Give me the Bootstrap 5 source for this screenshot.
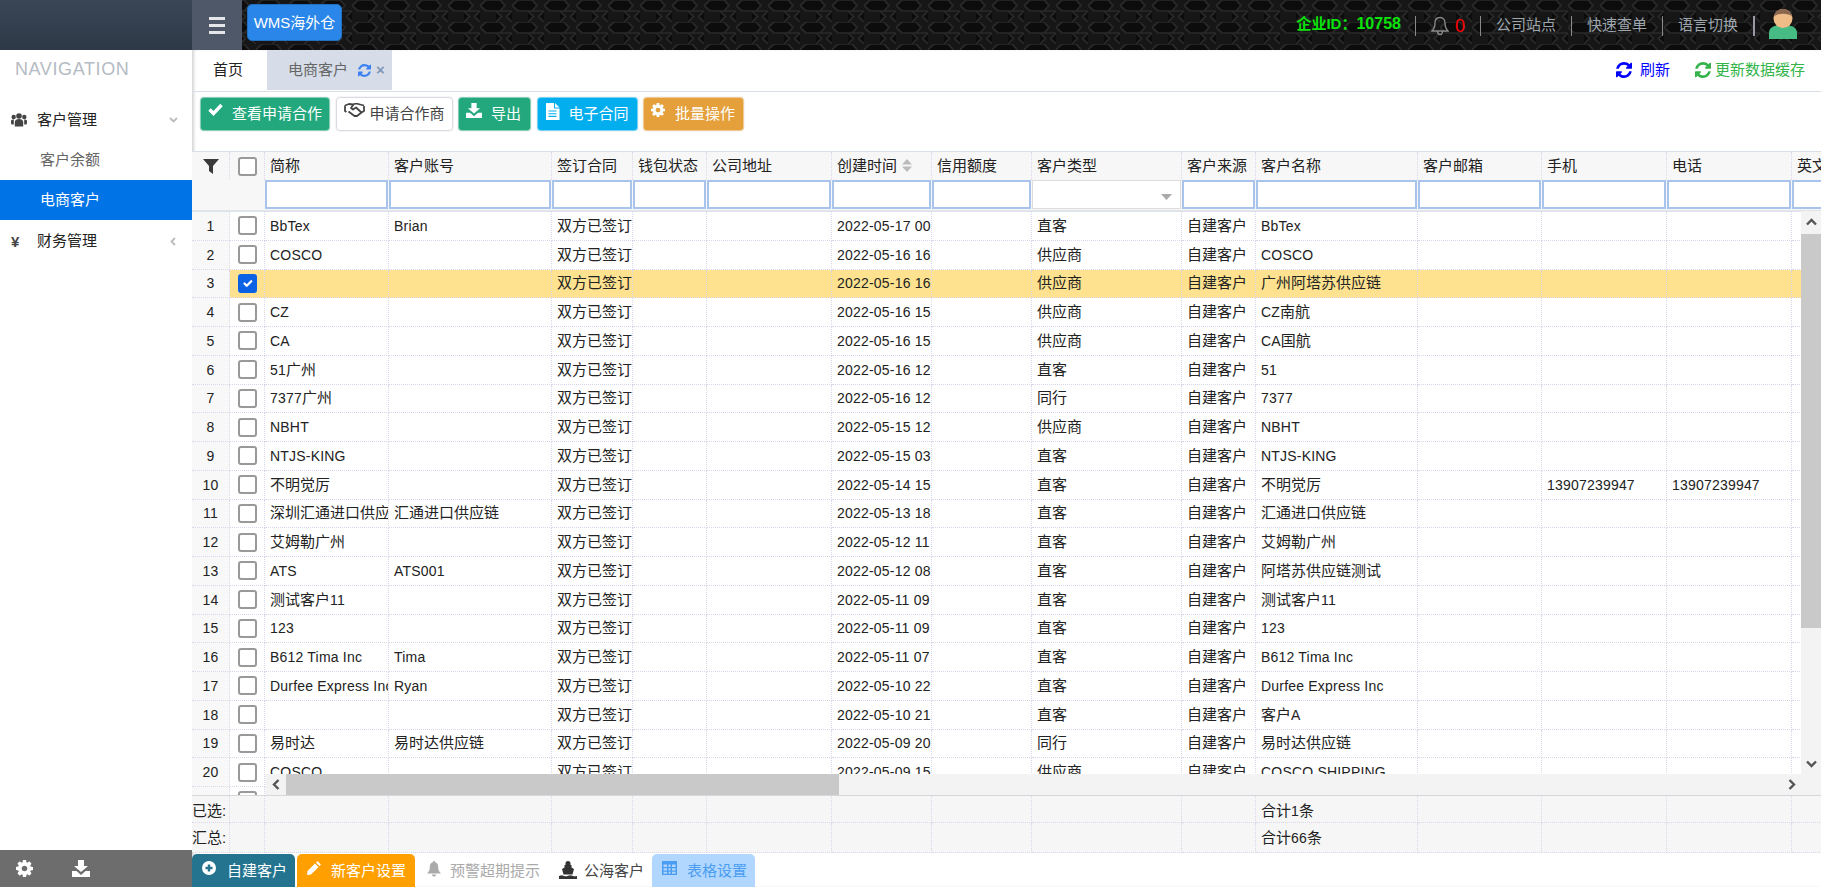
<!DOCTYPE html>
<html lang="zh">
<head>
<meta charset="utf-8">
<title>WMS海外仓</title>
<link href="https://cdn.jsdelivr.net/npm/bootstrap@5.3.0/dist/css/bootstrap.min.css" rel="stylesheet">
<style>
html,body{height:100%;overflow:hidden}
body{font-family:"Liberation Sans","Noto Sans CJK SC",sans-serif;font-size:15px;color:#222;background:#fff}
svg{display:block;flex:none}
.top-bar{height:50px;background:#161616;position:relative}
.hex-bg{position:absolute;inset:0;width:100%;height:100%}
.brand-box{width:192px;height:50px;background:linear-gradient(#3a4656,#2e3947);position:relative}
.burger{width:50px;height:50px;background:#4e5869;position:relative;border:0;padding:0}
.burger span{display:block;width:16px;height:3px;background:#e4e6ea;margin:2px auto}
.wms-btn{position:relative;margin:4px 0 0 5px;width:95px;height:37px;background:#2a86e8;color:#fff;border-radius:5px;border:1px solid #2470c0;padding:0;font-size:15px;line-height:35px;text-align:center}
.top-right{position:relative;height:50px;margin-left:auto;padding:0 24px 0 0;gap:15px;padding-bottom:14px;color:#9ea6ae}
.corp{color:#0be30b;font-weight:700;font-size:15px;margin-right:-1px}
.corp b{font-size:16px}
.vsep{width:1px;height:20px;background:#8a8a8a}
.vsep-b{width:2px;background:#9a9aa6;margin-right:-1px}
.bell-zero{color:#f00;font-size:18px;line-height:20px;margin-left:-9px}
.user-pic{margin-top:14px;margin-bottom:-3px}
.main-wrap{height:837px}
.side{width:192px;background:#fff;position:relative;flex:none}
.side-title{color:#b4bbc3;font-size:18px;letter-spacing:.6px;line-height:20px;padding:9px 0 0 15px;height:50px}
.side-item{height:40px;display:flex;align-items:center;color:#222}
.side-item .ico{width:37px;padding-left:11px;flex:none;color:#444}
.side-sub{padding-left:40px;color:#666}
.side-sub.on{background:#0073e6;color:#fff}
.side-last{height:43px}
.side-item .chev{margin-left:auto;margin-right:14px}
.side-foot{position:absolute;left:0;right:0;bottom:0;height:37px;background:#6c6d6c;padding-left:16px;gap:39px}
.pane{width:1629px;flex:none;box-shadow:inset 3px 0 3px -1px #d5d5d5}
.tabs-row{height:42px;border-bottom:1px solid #d8dfe6;flex:none}
.tab-home{margin-left:21px;width:54px;line-height:40px;height:40px}
.tab-cur{width:125px;height:40px;background:#d6dde8;color:#666;padding-left:21px;gap:10px}
.tab-x{color:#7f95b5;font-size:15px;font-weight:700;margin-left:-5px}
.tab-right{margin-left:auto;padding-right:16px;height:40px}
.tool-row{height:59px;padding:5px 0 0 8px;gap:5.5px;flex:none;align-items:flex-start}
.t-btn{height:34px;padding:0 7px;border-radius:4px;font-size:15px;line-height:32px;display:flex;flex-wrap:nowrap;white-space:nowrap;align-items:flex-start;color:#fff;border:1px solid rgba(255,255,255,.45);box-shadow:0 0 0 1px rgba(0,0,0,.04)}
.t-btn svg{margin-top:5px}
.t-green{background:#23a87d}
.t-white{background:#fff;color:#444;border-color:#d8dce2;padding:0 7px}
.t-sky{background:#03aeef;padding-right:8px}
.t-org{background:#e5a03b;padding-right:8px}
.t-exp{padding-right:9px}
.t-btn:hover{color:#fff}
.t-white:hover{color:#444}
.grid-wrap{height:645px;position:relative;overflow:hidden;border-top:1px solid #d8dfe6;border-bottom:1px solid #d6d6dc;flex:none}
.grid-tbl{table-layout:fixed;width:1720px;border-collapse:separate;border-spacing:0;margin:0;font-size:15px;color:#222}
.grid-tbl.table>thead>tr>th,.grid-tbl.table>tbody>tr>td{padding:0 0 0 5px;border:0;border-right:1px dotted #d9d6ea;border-bottom:1px dotted #d9d6ea;white-space:nowrap;overflow:hidden;font-weight:400;vertical-align:middle;background:#fff;box-shadow:none;line-height:20px;color:#222}
.grid-tbl.table>thead>tr>th{background:#f7f7f7;border-bottom:0}
.grid-tbl.table>thead>tr.head-a>th{height:28px}
.grid-tbl.table>thead>tr.head-b>th{height:30px;padding:0 1px 1px 0;border-right:0;border-bottom:2px solid #dfe3ea}
.grid-tbl.table>tbody>tr>td{height:28.75px}
.grid-tbl.table>tbody>tr>td.no-col,.grid-tbl.table>tbody>tr>td.ck-col{padding:0;text-align:center;background:#f8f8f8}
.grid-tbl.table>tbody>tr>td.ck-col{background:#fff}
.grid-tbl.table>tbody>tr.sel>td{background:#fee28f}
.grid-tbl.table>tbody>tr.sel>td.no-col{background:#f8f8f8}
.grid-tbl.table>thead>tr>th.no-col,.grid-tbl.table>thead>tr>th.ck-col{padding:0}
.lat{font-size:14px;letter-spacing:.2px}
.f-in{display:block;width:100%;height:29px;background:#fff;border:2px solid #a8c4ec;border-radius:0;padding:0}
.f-sel{border:1px solid #dcdcdc;position:relative;display:flex;align-items:center;justify-content:flex-end;padding:4px 8px 0 0}
.grid-tbl .form-check-input{width:19px;height:19px;border:2px solid #999;border-radius:3px;vertical-align:middle;background-color:#fff;display:block;margin:0 auto}
.grid-tbl .form-check-input:checked{background-color:#0b62e4;border-color:#0b62e4}
.sort-ico{margin-left:5px;vertical-align:-1px}
.h-bar{position:absolute;left:73px;right:20px;bottom:0;height:21px;background:#f3f3f3;display:flex;align-items:center}
.h-thumb{position:absolute;left:21px;width:553px;top:0;bottom:0;background:#c8c9c8}
.h-l{position:absolute;left:7px;top:5px}
.h-r{position:absolute;right:5px;top:5px}
.v-bar{position:absolute;right:0;top:59px;bottom:0;width:20px;background:#f3f3f3}
.v-thumb{position:absolute;left:0;right:0;top:23px;height:394px;background:#c8c9c8}
.v-u{position:absolute;left:5px;top:7px}
.v-d{position:absolute;left:5px;bottom:27px}
.sum-wrap{height:57px;overflow:hidden;flex:none}
.sum-tbl.table>tbody>tr>td{height:30px;background:#f6f6f6}
.sum-tbl.table>tbody>tr:first-child>td{height:27px;padding-top:4px}
.sum-tbl.table>tbody>tr>td.no-col{text-align:left;background:#f6f6f6}
.bottom-bar{height:34px;flex:none;gap:0}
.b-btn{height:33px;margin-top:1px;border-radius:5px 5px 0 0;color:#fff;display:flex;align-items:flex-start;line-height:33px}
.b-btn svg{margin-top:7px}
.b-teal{background:#24748f;width:103px;padding-left:10px;gap:11px}
.b-orange{background:#ff9f00;width:118px;margin-left:2px;padding-left:10px;gap:10px}
.b-plain{padding-left:12px;gap:9px;color:#aaa;width:144px}
.b-dark{color:#444;width:93px;padding-left:0;gap:7px}
.b-light{background:#b2d7ff;color:#4a9df0;width:103px;padding-left:10px;gap:10px}
</style>
</head>
<body>
<header class="top-bar d-flex">
  <svg class="hex-bg" aria-hidden="true">
    <defs><pattern id="hx" width="32" height="22" patternUnits="userSpaceOnUse">
      <path d="M6 0h14l5 5.500-5 5.500H6L0 5.500zM21 11h11M16 11l5.500 5.500L16 22M32 11l-5.500 5.500L32 22" fill="#0c0c0c" stroke="#292929" stroke-width="1.700"/>
    </pattern></defs>
    <rect width="100%" height="100%" fill="url(#hx)"/>
  </svg>
  <div class="brand-box"></div>
  <button class="burger d-flex flex-column justify-content-center" type="button" aria-label="菜单"><span></span><span></span><span></span></button>
  <div class="wms-btn">WMS海外仓</div>
  <div class="top-right d-flex align-items-end">
    <span class="corp">企业ID：<b>10758</b></span>
    <span class="vsep"></span>
    <svg width="18" height="20" viewBox="0 0 18 20" fill="none" stroke="#8b8b8b" stroke-width="1.3"><path d="M9 1.500c-3.400 0-5 2.500-5 5.500 0 4-1 6-3 8h16c-2-2-3-4-3-8 0-3-1.600-5.500-5-5.500zM6.500 15.500c0 4 5 4 5 0"/></svg>
    <span class="bell-zero">0</span>
    <span class="vsep"></span>
    <span>公司站点</span><span class="vsep"></span>
    <span>快速查单</span><span class="vsep"></span>
    <span>语言切换</span><span class="vsep vsep-b"></span>
    <svg class="user-pic" width="28" height="30" viewBox="0 0 28 30"><path d="M0 30v-6c0-6 6-8 14-8s14 2 14 8v6z" fill="#46bb84"/><circle cx="14" cy="9.500" r="9.500" fill="#efbb86"/><path d="M4.800 7.500C5.500 3 9 0 14 0s8.500 3 9.200 7.500C20 3.800 8 3.800 4.800 7.500z" fill="#8b6750"/></svg>
  </div>
</header>

<div class="main-wrap d-flex">
  <aside class="side">
    <div class="side-title">NAVIGATION</div>
    <div class="side-item">
      <span class="ico"><svg width="16" height="14" viewBox="0 0 16 14" fill="#444"><circle cx="8" cy="3" r="2.800"/><circle cx="2.700" cy="4" r="2.200"/><circle cx="13.300" cy="4" r="2.200"/><path d="M3.800 13.500V9c0-2 2-3 4.200-3s4.200 1 4.200 3v4.500zM0 10V8c0-1 1-1.500 2.800-1.500v5H.5zM16 10V8c0-1-1-1.500-2.800-1.500v5h2.300z"/></svg></span>
      <span>客户管理</span>
      <svg class="chev" width="9" height="6" viewBox="0 0 9 6" fill="none" stroke="#bbb" stroke-width="1.800"><path d="M1 1l3.500 3.500L8 1"/></svg>
    </div>
    <div class="side-item side-sub">客户余额</div>
    <div class="side-item side-sub on">电商客户</div>
    <div class="side-item side-last">
      <span class="ico" style="font-size:15px;font-weight:700;line-height:1">¥</span>
      <span>财务管理</span>
      <svg class="chev" style="margin-right:16px" width="6" height="9" viewBox="0 0 6 9" fill="none" stroke="#bbb" stroke-width="1.800"><path d="M5 1L1.500 4.500 5 8"/></svg>
    </div>
    <div class="side-foot d-flex align-items-center">
      <svg width="17" height="17" viewBox="0 0 1536 1536" fill="#fff"><path d="M1024 768q0-106-75-181t-181-75-181 75-75 181 75 181 181 75 181-75 75-181zm512-109v222q0 12-8 23t-20 13l-185 28q-19 54-39 91 35 50 107 138 10 12 10 25t-9 23q-27 37-99 108t-94 71q-12 0-26-9l-138-108q-44 23-91 38-16 136-29 186-7 28-36 28h-222q-14 0-24.500-8.500t-11.500-21.500l-28-184q-49-16-90-37l-141 107q-10 9-25 9-14 0-25-11-126-114-165-168-7-10-7-23 0-12 8-23 15-21 51-66.500t54-70.500q-27-50-41-99l-183-27q-13-2-21-12.500t-8-23.500v-222q0-12 8-23t19-13l186-28q14-46 39-92-40-57-107-138-10-12-10-24 0-10 9-23 26-36 98.500-107.500t94.500-71.500q13 0 26 10l138 107q44-23 91-38 16-136 29-186 7-28 36-28h222q14 0 24.500 8.500t11.500 21.500l28 184q49 16 90 37l142-107q9-9 24-9 13 0 25 10 129 119 165 170 7 8 7 22 0 12-8 23-15 21-51 66.500t-54 70.500q26 50 41 98l183 28q13 2 21 12.500t8 23.500z"/></svg>
      <svg width="18" height="17" viewBox="0 0 18 17" fill="#fff"><path d="M6 0h6v6h4l-7 6-7-6h4zM0 11h4.500L9 15l4.500-4H18v6H0z"/></svg>
    </div>
  </aside>

  <main class="pane d-flex flex-column">
    <div class="tabs-row d-flex">
      <div class="tab-home">首页</div>
      <div class="tab-cur d-flex align-items-center">
        <span>电商客户</span>
        <svg width="13" height="13" viewBox="0 0 1536 1536" fill="#3b82f0"><path d="M1511 928q0 5-1 7-64 268-268 434.500t-478 166.500q-146 0-282.500-55t-243.500-157l-129 129q-19 19-45 19t-45-19-19-45v-448q0-26 19-45t45-19h448q26 0 45 19t19 45-19 45l-137 137q71 66 161 102t187 36q134 0 250-65t186-179q11-17 53-117 8-23 30-23h192q13 0 22.500 9.500t9.500 22.500zm25-800v448q0 26-19 45t-45 19h-448q-26 0-45-19t-19-45 19-45l138-138q-148-137-349-137-134 0-250 65t-186 179q-11 17-53 117-8 23-30 23h-199q-13 0-22.500-9.500t-9.500-22.500v-7q65-268 270-434.500t480-166.500q146 0 284 55.500t245 156.500l130-129q19-19 45-19t45 19 19 45z"/></svg>
        <span class="tab-x">×</span>
      </div>
      <div class="tab-right d-flex align-items-center">
        <svg width="16" height="16" viewBox="0 0 1536 1536" fill="#00f"><path d="M1511 928q0 5-1 7-64 268-268 434.500t-478 166.500q-146 0-282.500-55t-243.500-157l-129 129q-19 19-45 19t-45-19-19-45v-448q0-26 19-45t45-19h448q26 0 45 19t19 45-19 45l-137 137q71 66 161 102t187 36q134 0 250-65t186-179q11-17 53-117 8-23 30-23h192q13 0 22.500 9.500t9.500 22.500zm25-800v448q0 26-19 45t-45 19h-448q-26 0-45-19t-19-45 19-45l138-138q-148-137-349-137-134 0-250 65t-186 179q-11 17-53 117-8 23-30 23h-199q-13 0-22.500-9.500t-9.500-22.500v-7q65-268 270-434.500t480-166.500q146 0 284 55.500t245 156.500l130-129q19-19 45-19t45 19 19 45z"/></svg>
        <span class="ms-2" style="color:#00f">刷新</span>
        <svg style="margin-left:25px" width="16" height="16" viewBox="0 0 1536 1536" fill="#34b44a"><path d="M1511 928q0 5-1 7-64 268-268 434.500t-478 166.500q-146 0-282.500-55t-243.500-157l-129 129q-19 19-45 19t-45-19-19-45v-448q0-26 19-45t45-19h448q26 0 45 19t19 45-19 45l-137 137q71 66 161 102t187 36q134 0 250-65t186-179q11-17 53-117 8-23 30-23h192q13 0 22.500 9.500t9.500 22.500zm25-800v448q0 26-19 45t-45 19h-448q-26 0-45-19t-19-45 19-45l138-138q-148-137-349-137-134 0-250 65t-186 179q-11 17-53 117-8 23-30 23h-199q-13 0-22.500-9.500t-9.500-22.500v-7q65-268 270-434.500t480-166.500q146 0 284 55.500t245 156.500l130-129q19-19 45-19t45 19 19 45z"/></svg>
        <span class="ms-1" style="color:#34b44a">更新数据缓存</span>
      </div>
    </div>

    <div class="tool-row d-flex">
      <a class="btn t-btn t-green" href="#"><svg width="15" height="13" viewBox="0 0 15 13" fill="none" stroke="#fff" stroke-width="3.400"><path d="M1.500 6.500l4 4 8-8.500"/></svg><span style="margin-left:9px">查看申请合作</span></a>
      <a class="btn t-btn t-white" href="#"><svg width="21" height="14" viewBox="0 0 21 14" fill="none" stroke="#444" stroke-width="1.800" stroke-linejoin="round"><path d="M1 2.500l4-1.500 4 .5 3-1 4 1 4 1M1 2.500V8l1.500 1M20 3v5l-2.500 1.500-4.500 3.500-2.500 0-6-4.500M9.500 1.500L7 5l2 1.500 3-2 5.500 5"/></svg><span style="margin-left:5px">申请合作商</span></a>
      <a class="btn t-btn t-green t-exp" href="#"><svg width="16" height="15" viewBox="0 0 18 17" fill="#fff"><path d="M6 0h6v6h4l-7 6-7-6h4zM0 11h4.500L9 15l4.500-4H18v6H0z"/></svg><span style="margin-left:9px">导出</span></a>
      <a class="btn t-btn t-sky" href="#"><svg width="15" height="17" viewBox="0 0 15 17" fill="#fff"><path d="M1 0h8v5.500h5.500V17H1zM10 0l4.500 4.500H10z"/><path d="M3.500 8h8M3.500 10.700h8M3.500 13.400h8" stroke="#03aeef" stroke-width="1.100"/></svg><span style="margin-left:9px">电子合同</span></a>
      <a class="btn t-btn t-org" href="#"><svg width="14" height="14" viewBox="0 0 1536 1536" fill="#fff"><path d="M1024 768q0-106-75-181t-181-75-181 75-75 181 75 181 181 75 181-75 75-181zm512-109v222q0 12-8 23t-20 13l-185 28q-19 54-39 91 35 50 107 138 10 12 10 25t-9 23q-27 37-99 108t-94 71q-12 0-26-9l-138-108q-44 23-91 38-16 136-29 186-7 28-36 28h-222q-14 0-24.500-8.500t-11.500-21.500l-28-184q-49-16-90-37l-141 107q-10 9-25 9-14 0-25-11-126-114-165-168-7-10-7-23 0-12 8-23 15-21 51-66.500t54-70.500q-27-50-41-99l-183-27q-13-2-21-12.500t-8-23.500v-222q0-12 8-23t19-13l186-28q14-46 39-92-40-57-107-138-10-12-10-24 0-10 9-23 26-36 98.500-107.500t94.500-71.500q13 0 26 10l138 107q44-23 91-38 16-136 29-186 7-28 36-28h222q14 0 24.500 8.500t11.500 21.500l28 184q49 16 90 37l142-107q9-9 24-9 13 0 25 10 129 119 165 170 7 8 7 22 0 12-8 23-15 21-51 66.500t-54 70.500q26 50 41 98l183 28q13 2 21 12.500t8 23.500z"/></svg><span style="margin-left:10px">批量操作</span></a>
    </div>

    <div class="grid-wrap">
      <table class="table grid-tbl" id="gridMain">
        <colgroup id="cols1"></colgroup>
        <thead>
          <tr class="head-a">
            <th class="no-col text-center"><svg class="mx-auto" width="16" height="15" viewBox="0 0 16 15"><path d="M0 0h16L10 7v8L6 12V7z" fill="#3a3a3a"/></svg></th>
            <th class="ck-col"><input class="form-check-input" type="checkbox" aria-label="全选"></th>
            <th>简称</th><th>客户账号</th><th>签订合同</th><th>钱包状态</th><th>公司地址</th>
            <th>创建时间<svg class="sort-ico d-inline-block" width="10" height="13" viewBox="0 0 10 13" fill="#bbb"><path d="M5 0l5 5.500H0zM5 13L0 7.500h10z"/></svg></th>
            <th>信用额度</th><th>客户类型</th><th>客户来源</th><th>客户名称</th><th>客户邮箱</th><th>手机</th><th>电话</th><th>英文名称</th>
          </tr>
          <tr class="head-b">
            <th></th><th></th>
            <th><div class="f-in"></div></th><th><div class="f-in"></div></th><th><div class="f-in"></div></th><th><div class="f-in"></div></th><th><div class="f-in"></div></th><th><div class="f-in"></div></th><th><div class="f-in"></div></th>
            <th><div class="f-in f-sel"><svg width="11" height="6" viewBox="0 0 11 6" fill="#aaa"><path d="M0 0h11L5.500 6z"/></svg></div></th>
            <th><div class="f-in"></div></th><th><div class="f-in"></div></th><th><div class="f-in"></div></th><th><div class="f-in"></div></th><th><div class="f-in"></div></th><th><div class="f-in"></div></th>
          </tr>
        </thead>
        <tbody id="rows"></tbody>
      </table>
      <div class="h-bar">
        <svg class="h-l" width="8" height="11" viewBox="0 0 8 11" fill="none" stroke="#555" stroke-width="2.400"><path d="M6.500 1L2 5.500 6.500 10"/></svg>
        <div class="h-thumb"></div>
        <svg class="h-r" width="8" height="11" viewBox="0 0 8 11" fill="none" stroke="#555" stroke-width="2.400"><path d="M1.500 1L6 5.500 1.500 10"/></svg>
      </div>
      <div class="v-bar">
        <svg class="v-u" width="11" height="8" viewBox="0 0 11 8" fill="none" stroke="#555" stroke-width="2.400"><path d="M1 6.500L5.500 2 10 6.500"/></svg>
        <div class="v-thumb"></div>
        <svg class="v-d" width="11" height="8" viewBox="0 0 11 8" fill="none" stroke="#555" stroke-width="2.400"><path d="M1 1.500L5.500 6 10 1.500"/></svg>
      </div>
    </div>

    <div class="sum-wrap">
      <table class="table grid-tbl sum-tbl">
        <colgroup id="cols2"></colgroup>
        <tbody id="sumRows"></tbody>
      </table>
    </div>

    <div class="bottom-bar d-flex">
      <a class="b-btn b-teal text-decoration-none" href="#"><svg width="14" height="14" viewBox="0 0 14 14"><circle cx="7" cy="7" r="7" fill="#fff"/><path d="M7 3.500v7M3.500 7h7" stroke="#24748f" stroke-width="2.400"/></svg><span>自建客户</span></a>
      <a class="b-btn b-orange text-decoration-none" href="#"><svg width="14" height="14" viewBox="0 0 14 14" fill="#fff"><path d="M10.500 0L14 3.500 12.500 5 9 1.500zM8 2.500L11.500 6 4 13.500 0 14l.5-4z"/></svg><span>新客户设置</span></a>
      <a class="b-btn b-plain text-decoration-none" href="#"><svg width="14" height="16" viewBox="0 0 14 16" fill="#aaa"><path d="M7 0c.8 0 1.200.6 1.200 1.300 2.300.6 3 2.500 3 5 0 3 1 4.500 2.800 6.200H0C1.800 10.800 2.800 9.300 2.800 6.300c0-2.500.7-4.400 3-5C5.800.6 6.200 0 7 0zM5 13.500h4c0 2.800-4 2.800-4 0z"/></svg><span>预警超期提示</span></a>
      <a class="b-btn b-plain b-dark text-decoration-none" href="#"><svg width="18" height="18" viewBox="0 0 18 18" fill="#333"><path d="M9 0a2.500 2.500 0 0 1 2.500 2.500V4h1v2.500l2.500 1.500-1.500 5.500h-9L3 8l2.500-1.500V4h1V2.500A2.500 2.500 0 0 1 9 0zM0 15c2-1 3-1 4.500-.3s3 .7 4.500 0 3-.7 4.500 0 2.500.7 4.500.3v3H0z"/></svg><span>公海客户</span></a>
      <a class="b-btn b-light text-decoration-none" href="#"><svg width="15" height="14" viewBox="0 0 15 14" fill="#4a9df0"><path d="M0 0h15v14H0zM1.500 3.500v2.500h3.500V3.500zm5 0v2.500h2V3.500zm3.500 0v2.500h3.500V3.500zM1.500 7.300v2.200h3.500V7.300zm5 0v2.200h2V7.300zm3.500 0v2.200h3.500V7.300zM1.500 10.800v2h3.500v-2zm5 0v2h2v-2zm3.500 0v2h3.500v-2z" fill-rule="evenodd"/></svg><span>表格设置</span></a>
    </div>
  </main>
</div>

<script>
var W=[38,35,124,163,81,74,125,100,100,150,74,162,124,125,125,120];
var colHtml=W.map(function(w){return '<col style="width:'+w+'px">'}).join('');
document.getElementById('cols1').innerHTML=colHtml;
document.getElementById('cols2').innerHTML=colHtml;
function t(s){return s.replace(/[\x21-\x7e][\x20-\x7e]*/g,function(m){return '<span class="lat">'+m+'</span>'})}
var D=[
['BbTex','Brian','05-17 00','直客','BbTex'],
['COSCO','','05-16 16','供应商','COSCO'],
['','','05-16 16','供应商','广州阿塔苏供应链'],
['CZ','','05-16 15','供应商','CZ南航'],
['CA','','05-16 15','供应商','CA国航'],
['51广州','','05-16 12','直客','51'],
['7377广州','','05-16 12','同行','7377'],
['NBHT','','05-15 12','供应商','NBHT'],
['NTJS-KING','','05-15 03','直客','NTJS-KING'],
['不明觉厉','','05-14 15','直客','不明觉厉','13907239947','13907239947'],
['深圳汇通进口供应链','汇通进口供应链','05-13 18','直客','汇通进口供应链'],
['艾姆勒广州','','05-12 11','直客','艾姆勒广州'],
['ATS','ATS001','05-12 08','直客','阿塔苏供应链测试'],
['测试客户11','','05-11 09','直客','测试客户11'],
['123','','05-11 09','直客','123'],
['B612 Tima Inc','Tima','05-11 07','直客','B612 Tima Inc'],
['Durfee Express Inc','Ryan','05-10 22','直客','Durfee Express Inc'],
['','','05-10 21','直客','客户A'],
['易时达','易时达供应链','05-09 20','同行','易时达供应链'],
['COSCO','','05-09 15','供应商','COSCO SHIPPING']
];
var h='';
D.forEach(function(r,i){
  var sel=i===2;
  var cells=[r[0],r[1],'双方已签订','','','2022-'+r[2],'',r[3],'自建客户',r[4],'',r[5]||'',r[6]||'',''];
  h+='<tr'+(sel?' class="sel"':'')+'><td class="no-col">'+t(String(i+1))+'</td><td class="ck-col"><input class="form-check-input" type="checkbox" aria-label="选择"'+(sel?' checked':'')+'></td>';
  cells.forEach(function(c){h+='<td>'+t(c)+'</td>'});
  h+='</tr>';
});
var blank='';for(var k=0;k<14;k++)blank+='<td></td>';
h+='<tr><td class="no-col"></td><td class="ck-col"><input class="form-check-input" type="checkbox" aria-label="选择"></td>'+blank+'</tr>';
document.getElementById('rows').innerHTML=h;
function sumRow(lbl,txt){var s='<tr><td class="no-col">'+lbl+'</td><td></td>';for(var k=0;k<14;k++){s+='<td>'+(k===9?t(txt):'')+'</td>'}return s+'</tr>'}
document.getElementById('sumRows').innerHTML=sumRow('已选:','合计1条')+sumRow('汇总:','合计66条');
</script>
<script src="https://cdn.jsdelivr.net/npm/bootstrap@5.3.0/dist/js/bootstrap.bundle.min.js"></script>
</body>
</html>
